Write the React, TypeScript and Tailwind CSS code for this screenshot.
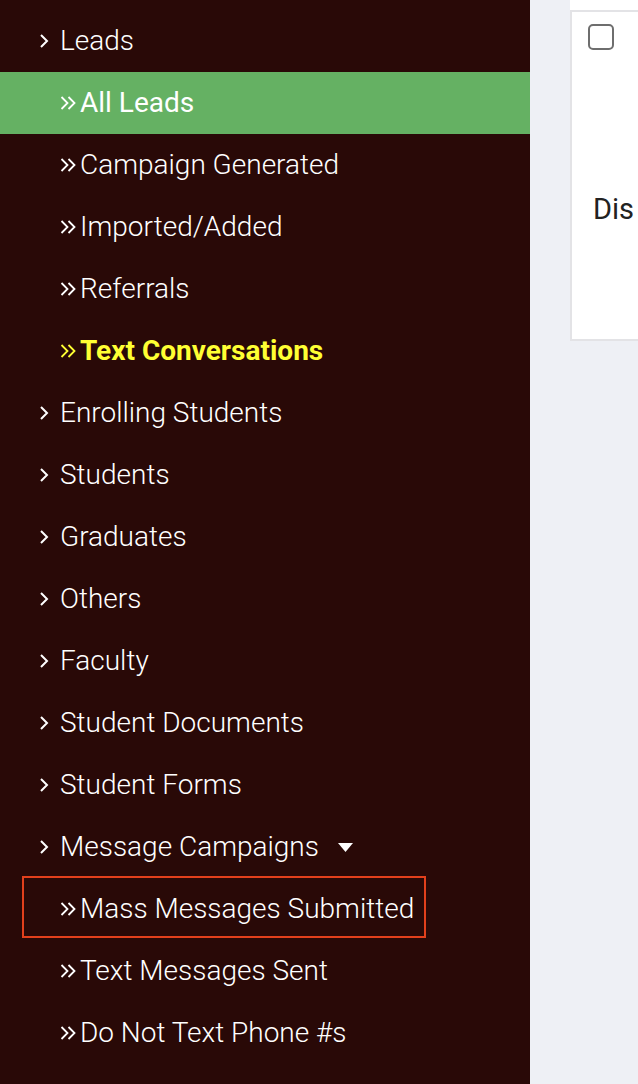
type Item = {
  label: string;
  sub?: boolean;
  active?: boolean;
  highlight?: boolean;
  outlined?: boolean;
  caret?: boolean;
};

const items: Item[] = [
  { label: "Leads" },
  { label: "All Leads", sub: true, active: true },
  { label: "Campaign Generated", sub: true },
  { label: "Imported/Added", sub: true },
  { label: "Referrals", sub: true },
  { label: "Text Conversations", sub: true, highlight: true },
  { label: "Enrolling Students" },
  { label: "Students" },
  { label: "Graduates" },
  { label: "Others" },
  { label: "Faculty" },
  { label: "Student Documents" },
  { label: "Student Forms" },
  { label: "Message Campaigns", caret: true },
  { label: "Mass Messages Submitted", sub: true, outlined: true },
  { label: "Text Messages Sent", sub: true },
  { label: "Do Not Text Phone #s", sub: true },
];

function Chevron() {
  return (
    <svg width="10" height="16" viewBox="0 0 10 16" className="mr-[11px] shrink-0">
      <path d="M2 2 L8 8 L2 14" fill="none" stroke="white" strokeWidth="2" />
    </svg>
  );
}

function DoubleChevron({ color }: { color: string }) {
  return (
    <svg width="17" height="16" viewBox="0 0 17 16" className="mr-[3px] shrink-0">
      <path d="M1.5 2 L7.5 8 L1.5 14 M8.5 2 L14.5 8 L8.5 14" fill="none" stroke={color} strokeWidth="1.8" />
    </svg>
  );
}

function NavRow({ item }: { item: Item }) {
  const color = item.highlight
    ? "text-[#ffff33] font-bold"
    : item.active
    ? "text-white font-normal"
    : "text-white font-light";
  return (
    <div
      className={`relative flex h-[62px] items-center ${
        item.active ? "bg-[#65b163]" : ""
      } ${item.sub ? "pl-[60px]" : "pl-[39px]"}`}
    >
      {item.outlined && (
        <div className="absolute left-[22px] top-[-2px] h-[62px] w-[404px] border-2 border-[#e2401c]" />
      )}
      {item.sub ? (
        <DoubleChevron color={item.highlight ? "#ffff33" : "white"} />
      ) : (
        <Chevron />
      )}
      <span className={`text-[28px] leading-none ${color}`}>{item.label}</span>
      {item.caret && (
        <svg width="15" height="9" viewBox="0 0 15 9" className="ml-[19px]">
          <path d="M0 0 L15 0 L7.5 9 Z" fill="white" />
        </svg>
      )}
    </div>
  );
}

export default function App() {
  return (
    <div className="flex h-[1084px] w-[638px] overflow-hidden bg-[#eef0f5] font-['Roboto',sans-serif]">
      <aside className="h-full w-[530px] shrink-0 bg-[#290907] pt-[10px]">
        {items.map((it) => (
          <NavRow key={it.label} item={it} />
        ))}
      </aside>
      <main className="flex-1 pl-[40px]">
        <div className="h-[10px] bg-white" />
        <div className="h-[331px] border-y-2 border-l-2 border-[#e3e3e6] bg-white">
          <div className="flex pl-[16px] pt-[12px]">
            <div className="h-[26px] w-[26px] rounded-[5px] border-2 border-[#6e6e6e]" />
          </div>
          <div className="pl-[21px] pt-[145px] text-[29px] leading-none text-[#222]">Dis</div>
        </div>
      </main>
    </div>
  );
}
